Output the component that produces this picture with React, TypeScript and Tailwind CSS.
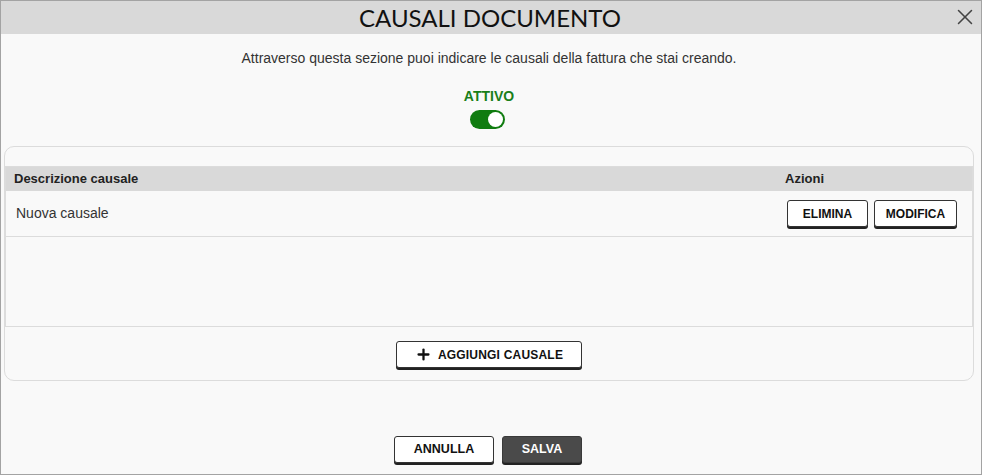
import { Plus, X } from 'lucide-react';

export default function App() {
  return (
    <div
      className="w-[982px] h-[475px] bg-[#f9f9f9] border border-[#a3a3a3] flex flex-col overflow-hidden text-[#222]"
      style={{ fontFamily: '"Liberation Sans", Arial, sans-serif' }}
    >
      {/* Header */}
      <div className="h-[33px] shrink-0 bg-[#d9d9d9] relative flex items-center justify-center pr-[2px]">
        <h1 className="text-[24px] leading-none text-[#111]" style={{ fontFamily: 'Lato, sans-serif' }}>
          CAUSALI DOCUMENTO
        </h1>
        <button className="absolute right-[3px] top-[3px] text-[#444]">
          <X size={26} strokeWidth={1.4} />
        </button>
      </div>

      <p className="mt-[14px] text-center text-[14px] text-[#333] pr-[4px]">
        Attraverso questa sezione puoi indicare le causali della fattura che stai creando.
      </p>

      {/* Toggle */}
      <div className="mt-[20px] flex flex-col items-center pr-[4px]">
        <span className="text-[14px] font-bold text-[#1a7f1a] leading-none">ATTIVO</span>
        <div className="mt-[7px] mr-[4px] w-[35px] h-[19px] rounded-full bg-[#107c10] flex items-center justify-end pr-[2px]">
          <div className="w-[15px] h-[15px] rounded-full bg-white" />
        </div>
      </div>

      {/* Card */}
      <div className="ml-[3px] mr-[7px] mt-[17px] h-[235px] rounded-[10px] border border-[#dcdcdc] flex flex-col">
        <div className="mt-[19px] h-[161px] border-y border-x border-[#dcdcdc] flex flex-col">
          <div className="h-[24px] bg-[#d9d9d9] flex items-center text-[13px] font-bold text-[#222]">
            <span className="pl-[8px] flex-1">Descrizione causale</span>
            <span className="w-[187px]">Azioni</span>
          </div>
          <div className="h-[46px] border-b border-[#dcdcdc] flex items-center">
            <span className="pl-[10px] flex-1 text-[14px] text-[#333]">Nuova causale</span>
            <div className="flex gap-[6px] pr-[15px]">
              <button className="w-[81px] h-[27px] rounded-[3px] bg-white border border-[#333] shadow-[0_2px_0_#222] text-[12px] font-bold text-[#111]">
                ELIMINA
              </button>
              <button className="w-[83px] h-[27px] rounded-[3px] bg-white border border-[#333] shadow-[0_2px_0_#222] text-[12px] font-bold text-[#111]">
                MODIFICA
              </button>
            </div>
          </div>
        </div>
        <div className="flex justify-center mt-[14px]">
          <button className="w-[186px] h-[27px] rounded-[3px] bg-white border border-[#333] shadow-[0_2px_0_#222] flex items-center justify-center gap-[6px] text-[12px] font-bold tracking-[0.2px] text-[#111]">
            <Plus size={17} strokeWidth={3.2} />
            AGGIUNGI CAUSALE
          </button>
        </div>
      </div>

      {/* Footer */}
      <div className="mt-[55px] flex justify-center gap-[8px] pr-[6px]">
        <button className="w-[100px] h-[27px] rounded-[3px] bg-white border border-[#333] shadow-[0_2px_0_#222] text-[12.5px] font-bold text-[#111]">
          ANNULLA
        </button>
        <button className="w-[80px] h-[27px] rounded-[3px] bg-[#4a4a4a] border border-[#3a3a3a] shadow-[0_2px_0_#222] text-[12.5px] font-bold text-white">
          SALVA
        </button>
      </div>
    </div>
  );
}
